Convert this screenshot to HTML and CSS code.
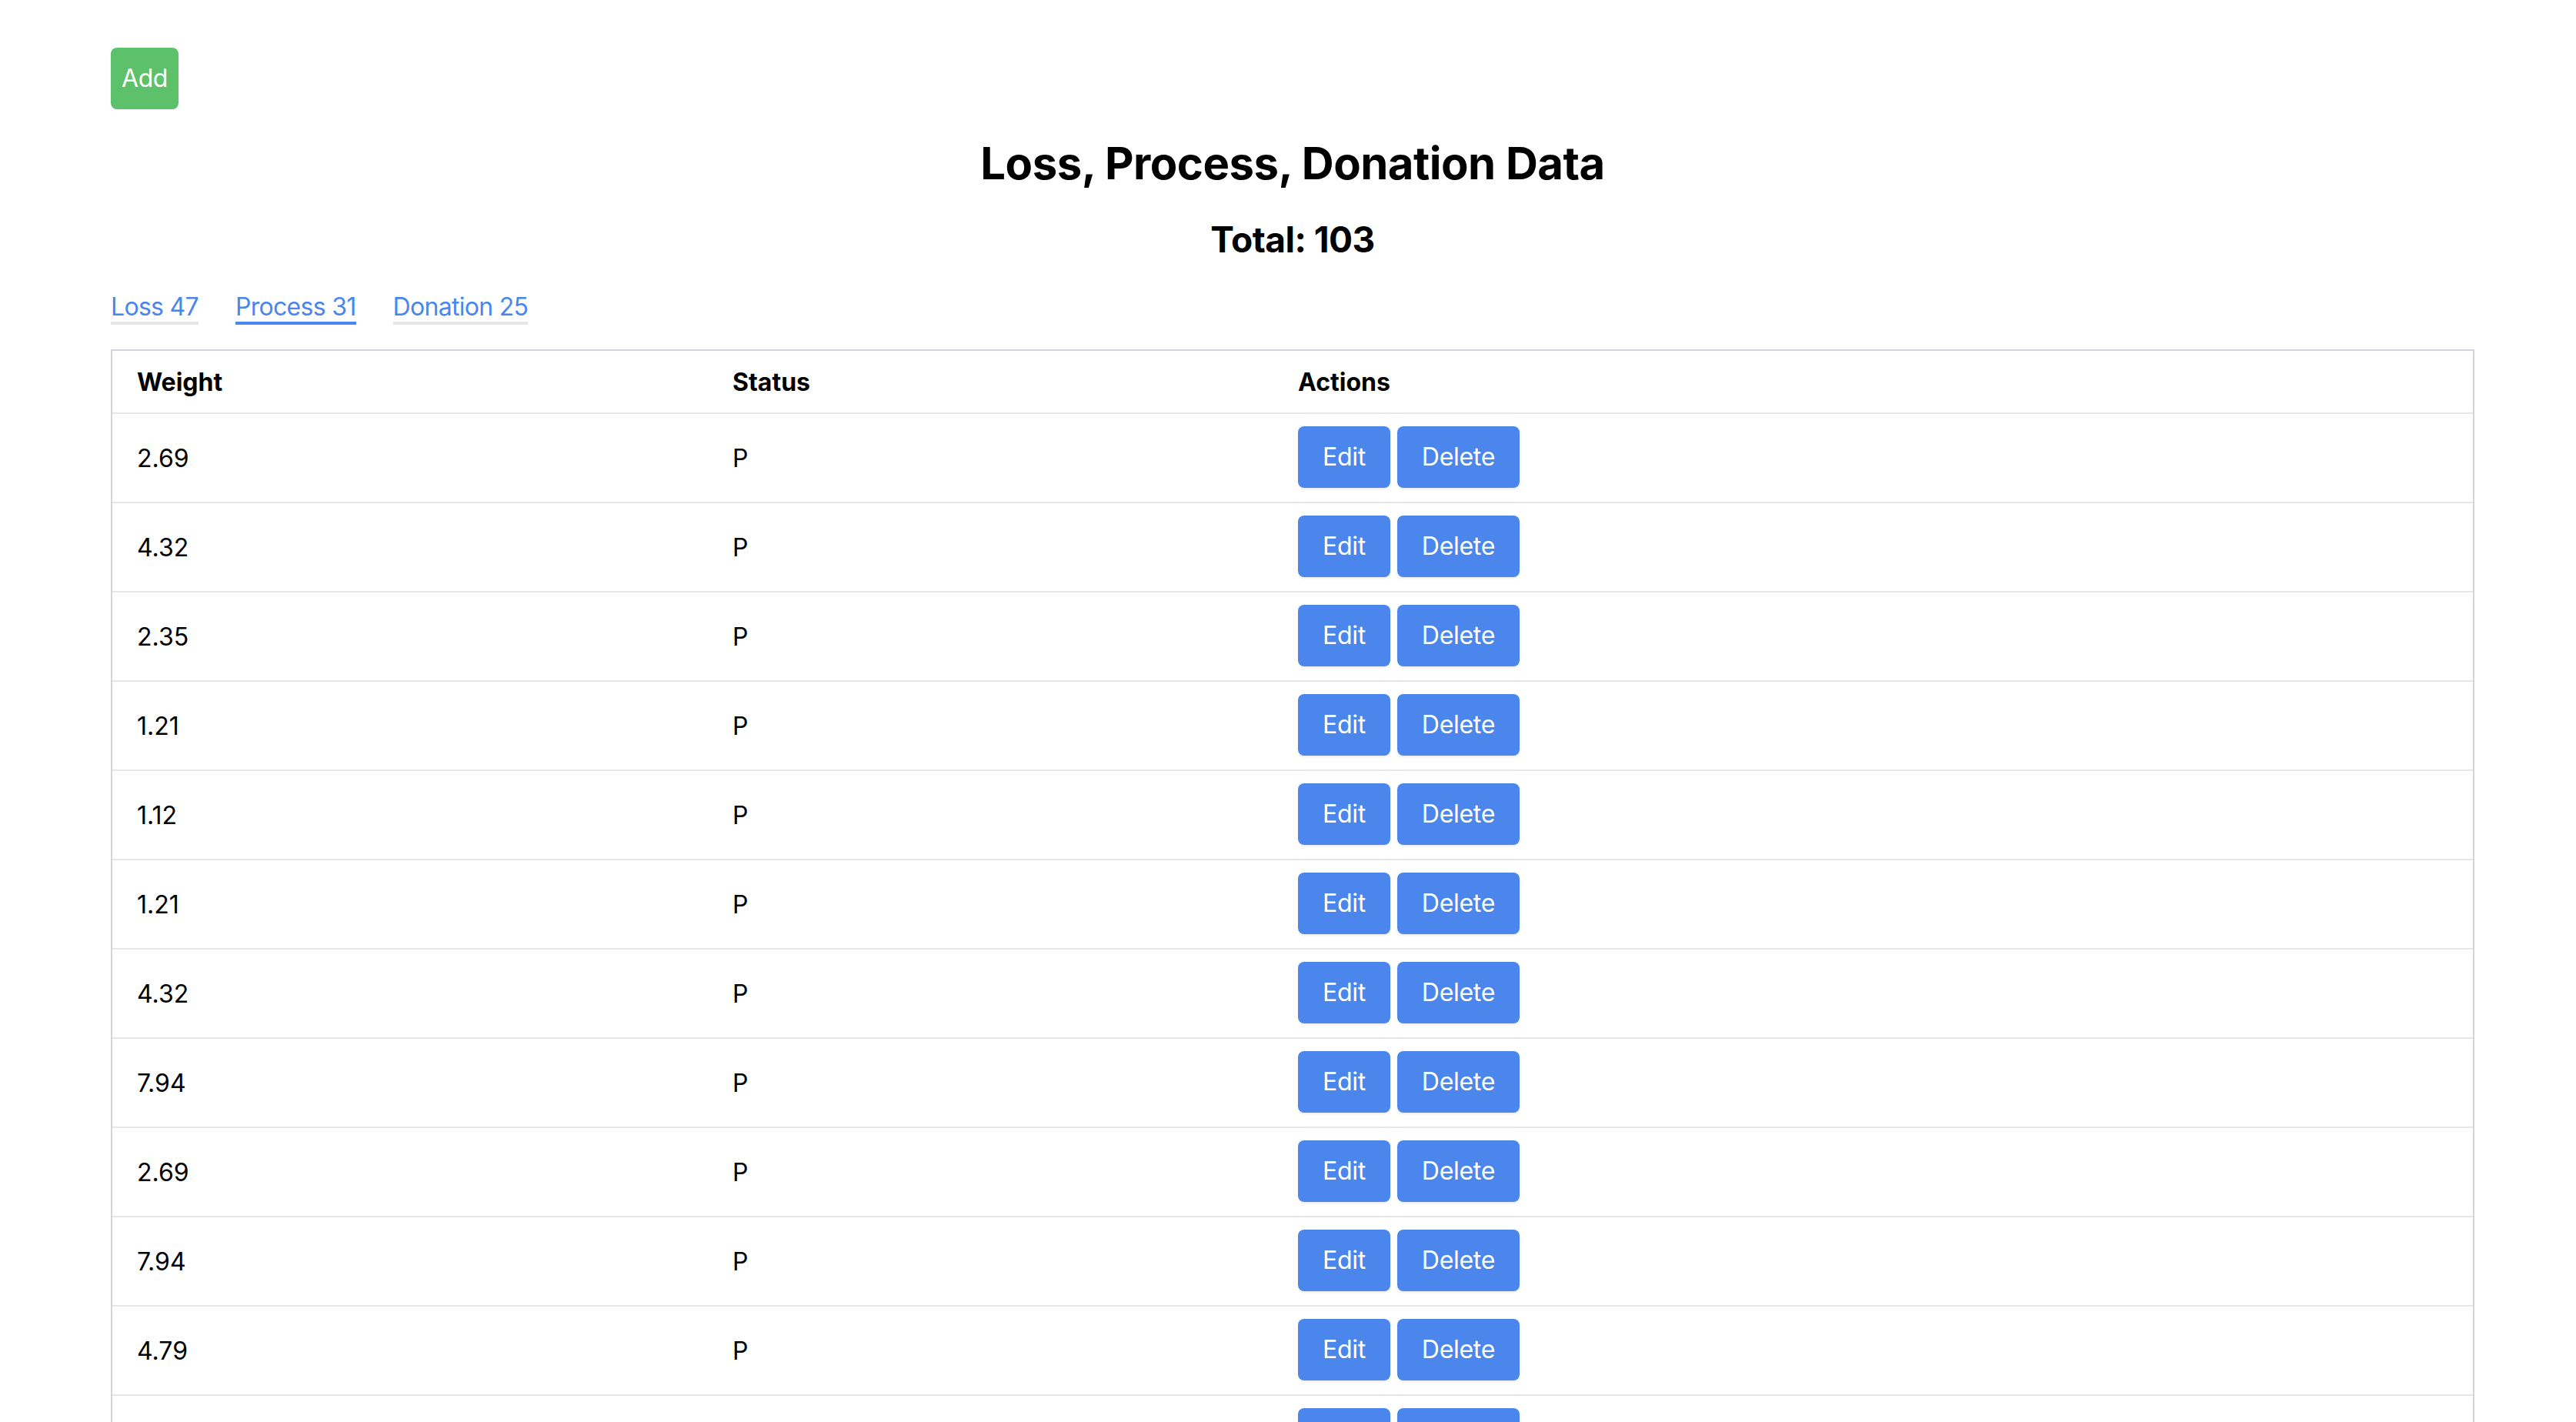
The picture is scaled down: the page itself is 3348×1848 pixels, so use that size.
FILE: index.html
```html
<!DOCTYPE html>
<html lang="en">
<head>
<meta charset="utf-8">
<title>Loss, Process, Donation Data</title>
<link rel="stylesheet" href="styles.css">
</head>
<body>
<div class="page">
  <div class="toolbar">
    <button class="btn btn-add">Add</button>
  </div>
  <h1 class="title">Loss, Process, Donation Data</h1>
  <h2 class="total">Total: 103</h2>
  <nav class="tabs">
    <a class="tab">Loss 47</a>
    <a class="tab tab-active">Process 31</a>
    <a class="tab">Donation 25</a>
  </nav>
  <table class="data">
    <colgroup>
      <col class="col-weight">
      <col class="col-status">
      <col class="col-actions">
    </colgroup>
    <thead>
      <tr><th>Weight</th><th>Status</th><th>Actions</th></tr>
    </thead>
    <tbody>
      <tr><td>2.69</td><td>P</td><td><div class="actions"><button class="btn btn-blue">Edit</button><button class="btn btn-blue">Delete</button></div></td></tr>
      <tr><td>4.32</td><td>P</td><td><div class="actions"><button class="btn btn-blue">Edit</button><button class="btn btn-blue">Delete</button></div></td></tr>
      <tr><td>2.35</td><td>P</td><td><div class="actions"><button class="btn btn-blue">Edit</button><button class="btn btn-blue">Delete</button></div></td></tr>
      <tr><td>1.21</td><td>P</td><td><div class="actions"><button class="btn btn-blue">Edit</button><button class="btn btn-blue">Delete</button></div></td></tr>
      <tr><td>1.12</td><td>P</td><td><div class="actions"><button class="btn btn-blue">Edit</button><button class="btn btn-blue">Delete</button></div></td></tr>
      <tr><td>1.21</td><td>P</td><td><div class="actions"><button class="btn btn-blue">Edit</button><button class="btn btn-blue">Delete</button></div></td></tr>
      <tr><td>4.32</td><td>P</td><td><div class="actions"><button class="btn btn-blue">Edit</button><button class="btn btn-blue">Delete</button></div></td></tr>
      <tr><td>7.94</td><td>P</td><td><div class="actions"><button class="btn btn-blue">Edit</button><button class="btn btn-blue">Delete</button></div></td></tr>
      <tr><td>2.69</td><td>P</td><td><div class="actions"><button class="btn btn-blue">Edit</button><button class="btn btn-blue">Delete</button></div></td></tr>
      <tr><td>7.94</td><td>P</td><td><div class="actions"><button class="btn btn-blue">Edit</button><button class="btn btn-blue">Delete</button></div></td></tr>
      <tr><td>4.79</td><td>P</td><td><div class="actions"><button class="btn btn-blue">Edit</button><button class="btn btn-blue">Delete</button></div></td></tr>
      <tr><td>2.35</td><td>P</td><td><div class="actions"><button class="btn btn-blue">Edit</button><button class="btn btn-blue">Delete</button></div></td></tr>
    </tbody>
  </table>
</div>
</body>
</html>
```
FILE: styles.css
```css
html, body {
  margin: 0;
  padding: 0;
  background: #ffffff;
}
body {
  font-family: Inter, "Liberation Sans", sans-serif;
  color: #000000;
  font-size: 32px;
  line-height: 48px;
}
.page {
  width: 3072px;
  margin-left: 144px;
  padding-top: 62px;
}
.toolbar {
  display: flex;
}
.btn {
  font-family: inherit;
  font-size: 32px;
  line-height: 48px;
  padding: 16px 32px;
  border: 0;
  border-radius: 8px;
  color: #ffffff;
  letter-spacing: -0.3px;
  cursor: pointer;
}
.btn-add {
  background: #5dc16c;
  padding: 16px 14px;
  height: 80px;
  letter-spacing: -0.4px;
}
.btn-blue {
  background: #4b86ed;
  height: 80px;
  box-shadow: 0 2px 3px rgba(0, 0, 0, 0.08);
}
.title {
  margin: 34px 0 0;
  text-align: center;
  font-size: 58px;
  line-height: 72px;
  font-weight: 700;
  letter-spacing: -0.5px;
}
.total {
  margin: 31px 0 0;
  text-align: center;
  font-size: 46px;
  line-height: 64px;
  font-weight: 700;
  letter-spacing: -0.5px;
}
.tabs {
  display: flex;
  gap: 48px;
  margin-top: 37px;
}
.tab {
  color: #4a86ec;
  font-size: 32px;
  line-height: 38px;
  letter-spacing: -0.7px;
  border-bottom: 4px solid #e5e7eb;
  cursor: pointer;
}
.tab-active {
  border-bottom-color: #4a86ec;
}
.data {
  margin-top: 32px;
  width: 3072px;
  table-layout: fixed;
  border-collapse: separate;
  border-spacing: 0;
  border: 2px solid #d1d5db;
  border-bottom: 0;
}
.col-weight { width: 774px; }
.col-status { width: 735px; }
.data th {
  text-align: left;
  font-weight: 700;
  padding: 17px 32px 15px;
  border-bottom: 2px solid #e5e7eb;
}
.data td {
  padding: 16px 32px 18px;
  border-bottom: 2px solid #e5e7eb;
  vertical-align: middle;
}
.data td:not(:last-child) {
  padding-top: 18px;
  padding-bottom: 16px;
}
.actions {
  display: flex;
  gap: 9px;
}
```
